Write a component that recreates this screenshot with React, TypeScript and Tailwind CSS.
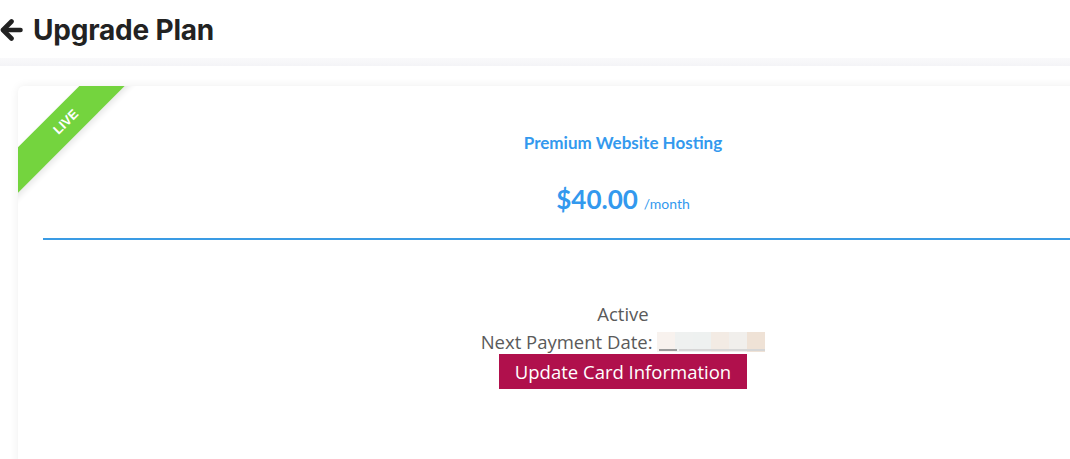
const blurBlocks = ["#f8f2ee", "#eff1f0", "#eef1f0", "#f3ebe4", "#f1efec", "#efe2d6"];

function BackArrow() {
  return (
    <svg width="23" height="24" viewBox="0 0 23 24" fill="none" stroke="#222" strokeWidth="4.6" strokeLinecap="round" strokeLinejoin="round">
      <path d="M20.5 12H3.5" />
      <path d="M11.5 3.5L3 12L11.5 20.5" />
    </svg>
  );
}

export default function App() {
  return (
    <div className="h-screen w-full overflow-hidden bg-white" style={{ fontFamily: "'Open Sans', sans-serif" }}>
      {/* header */}
      <div className="flex h-[58px] items-center gap-[10px] bg-white pt-[2px]">
        <BackArrow />
        <h1 className="text-[28px] font-bold leading-none text-[#222] tracking-[-0.2px]" style={{ fontFamily: "Inter, sans-serif" }}>
          Upgrade Plan
        </h1>
      </div>
      <div className="h-[8px] bg-gradient-to-b from-[#f9f9fb] to-[#f4f4f7]" />

      {/* card */}
      <div className="pl-[18px] pt-[20px]">
        <div className="relative h-[400px] w-[1210px] overflow-hidden rounded-[6px] bg-white px-[25px] shadow-[0_0_10px_rgba(0,0,0,0.07)]">
          {/* ribbon */}
          <div className="absolute left-[-47px] top-[20px] w-[190px] -rotate-45 bg-[#74d43e] py-[7px] text-center text-[13px] font-bold leading-[18px] text-white shadow-[0_3px_6px_rgba(0,0,0,0.1)]" style={{ fontFamily: "'Liberation Sans', sans-serif" }}>
            LIVE
          </div>

          <div className="flex flex-col items-center" style={{ fontFamily: "Lato, sans-serif" }}>
            <div className="pt-[46px] text-[17px] font-bold leading-[22px] text-[#3399ee]">Premium Website Hosting</div>
            <div className="mt-[30px] flex items-baseline gap-[6px] text-[#3399ee]">
              <span className="text-[26px] font-bold leading-[30px]">$40.00</span>
              <span className="text-[14px]">/month</span>
            </div>
          </div>

          <div className="mt-[24px] h-[2px] bg-[#3a9be4]" />

          <div className="flex flex-col items-center pt-[60px] text-[18.5px] text-[#5a5a5a]">
            <div className="leading-[28px]">Active</div>
            <div className="flex items-center leading-[28px]">
              <span>Next Payment Date:&nbsp;</span>
              <span className="relative flex h-[20px]">
                {blurBlocks.map((c, i) => (
                  <span key={i} className="h-[20px] w-[18px]" style={{ background: c }} />
                ))}
                <span className="absolute bottom-[1px] left-[2px] h-[2px] w-[18px] bg-[#9a9a9a]" />
                <span className="absolute bottom-[1px] left-[22px] h-[2px] w-[86px] bg-[#d6d6d6]" />
              </span>
            </div>
            <button className="mt-[-2px] h-[35px] w-[248px] bg-[#b0104c] text-[18.5px] text-white">
              Update Card Information
            </button>
          </div>
        </div>
      </div>
    </div>
  );
}
